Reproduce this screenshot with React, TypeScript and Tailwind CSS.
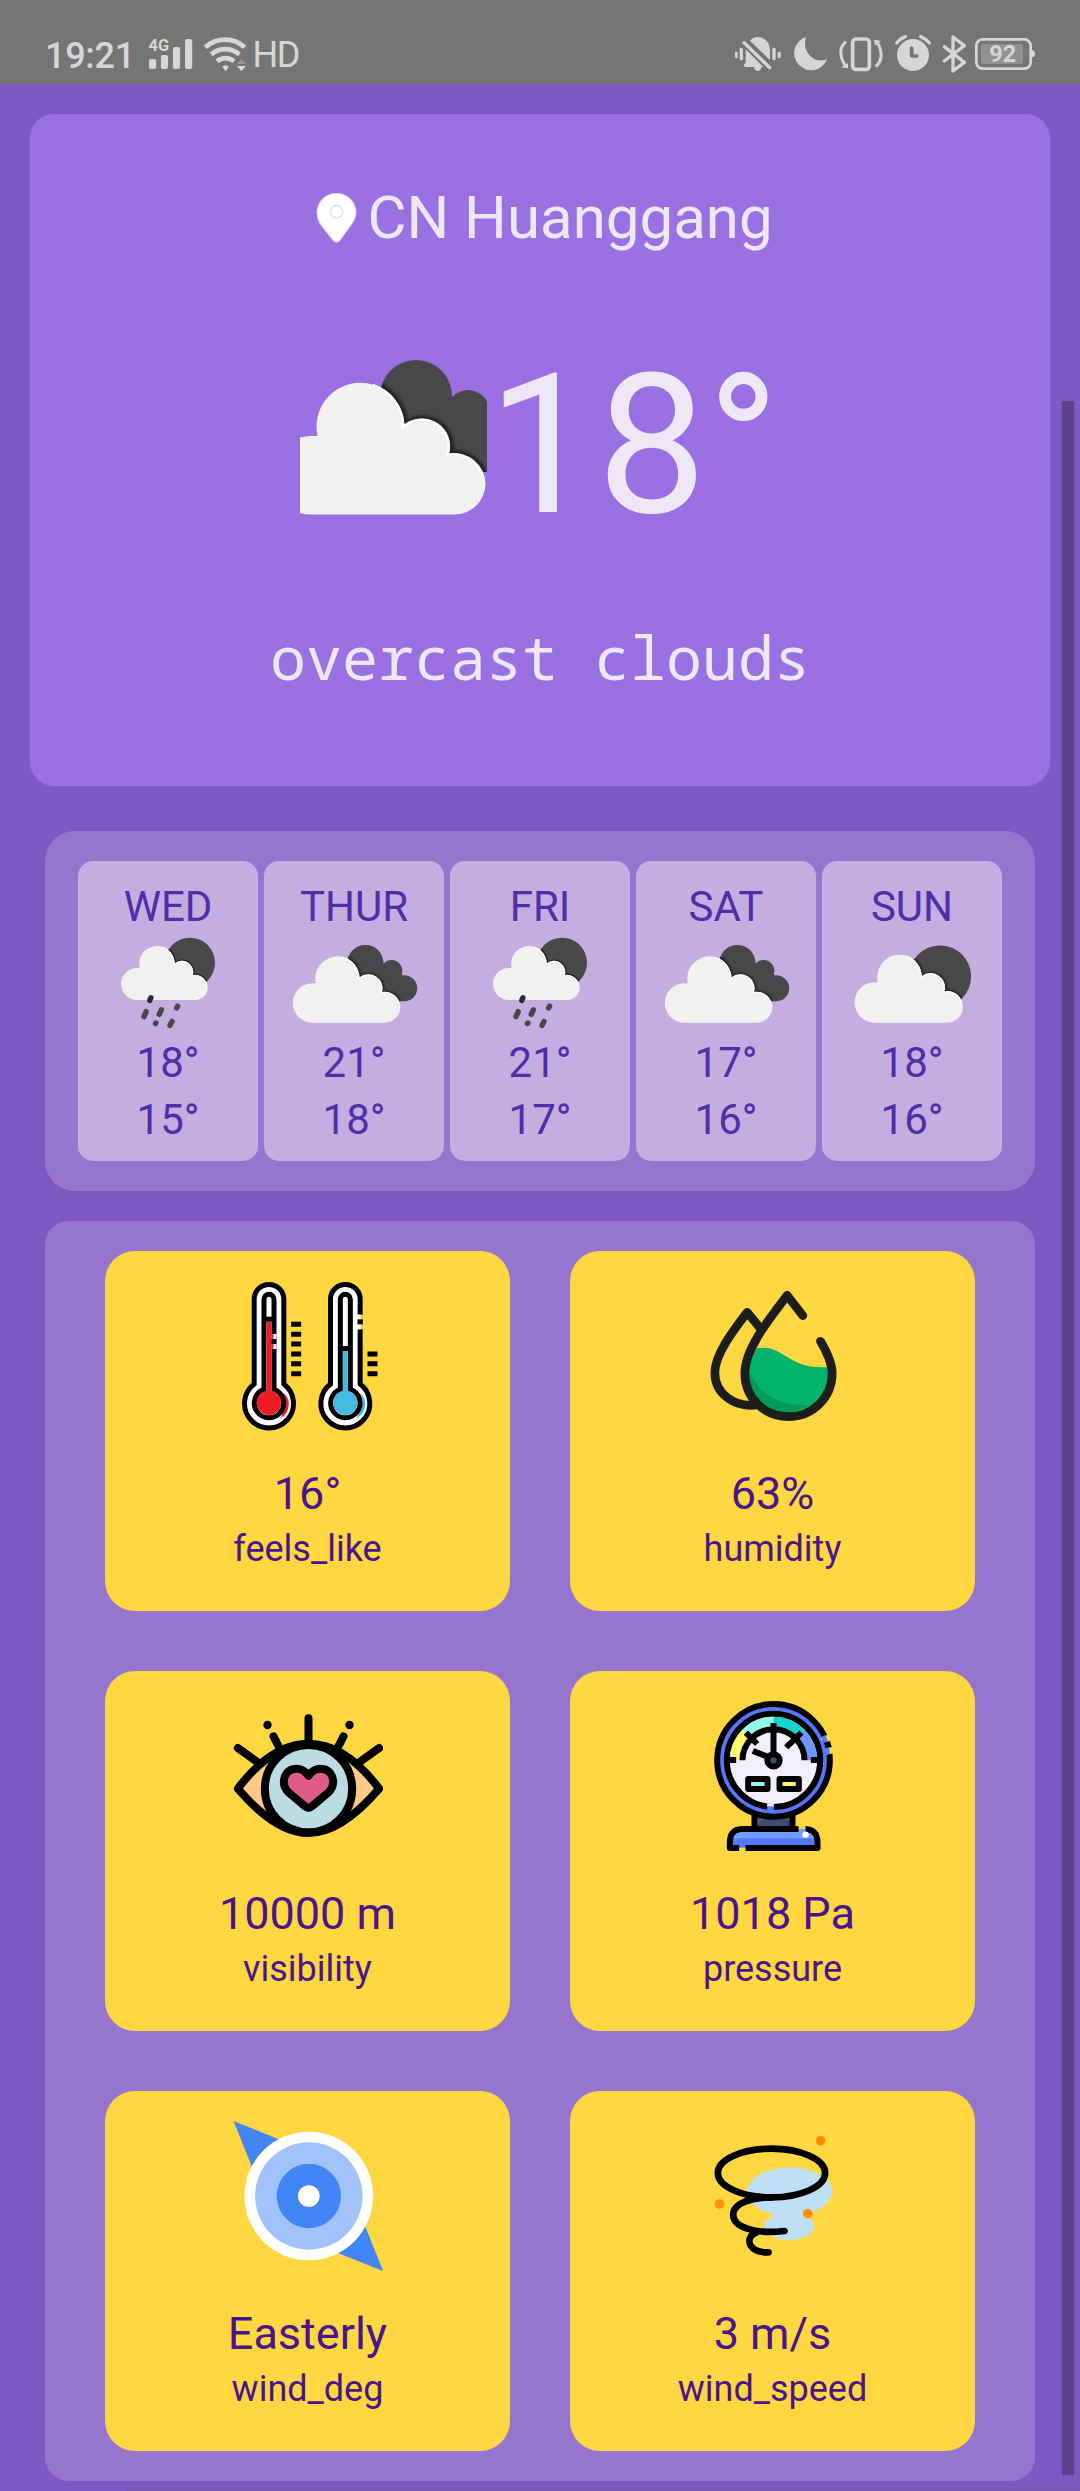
import type { ReactNode } from "react";

const WHITE_CLOUD =
  "M11 168.5A39.25 39.25 0 0 1 11 90L17.5 90A44 44 0 1 1 104.5 80L106 78.5A27.3 27.3 0 0 1 149 107.7A31 31 0 0 1 185.5 137.5A31 31 0 0 1 154.5 168.5Z";
const CLOUD_EDGE =
  "M74 38A44 44 0 0 1 104.5 80L106 78.5A27.3 27.3 0 0 1 149 107.7A31 31 0 0 1 184 129";

function DarkCloud() {
  return (
    <>
      <circle cx="116" cy="50" r="36" />
      <circle cx="168" cy="65.5" r="21.5" />
      <circle cx="193" cy="100" r="26" />
      <path d="M116 50L152.5 51L168 66L189 72L193 100V126H130Z" />
    </>
  );
}

function FrontCloud({ id, children }: { id: string; children: ReactNode }) {
  return (
    <>
      <defs>
        <clipPath id={id}>{children}</clipPath>
        <filter id={id + "s"} x="-20%" y="-20%" width="140%" height="140%">
          <feGaussianBlur stdDeviation="1.6" />
        </filter>
      </defs>
      <g clipPath={`url(#${id})`}>
        <path d={CLOUD_EDGE} fill="none" stroke="#222223" strokeWidth="7" filter={`url(#${id}s)`} />
      </g>
      <path d={WHITE_CLOUD} fill="#f1f1f0" />
      <path d={CLOUD_EDGE} fill="none" stroke="#ffffff" strokeWidth="2.5" transform="translate(-1.4 1)" />
    </>
  );
}

function BigCloud() {
  return (
    <svg className="h-[200px] w-[187px] shrink-0" viewBox="0 0 187 200">
      <g fill="#48484a">
        <DarkCloud />
      </g>
      <FrontCloud id="hero">
        <circle cx="116" cy="50" r="36" />
        <circle cx="168" cy="65.5" r="21.5" />
        <circle cx="193" cy="100" r="26" />
        <path d="M116 50L152.5 51L168 66L189 72L193 100V126H130Z" />
      </FrontCloud>
    </svg>
  );
}

function OvercastIcon({ id }: { id: string }) {
  return (
    <svg className="h-[100px] w-[180px]" viewBox="0 0 180 100">
      <g transform="translate(43 6.9) scale(.5032)">
        <g fill="#48484a">
          <DarkCloud />
        </g>
        <FrontCloud id={id}>
          <circle cx="116" cy="50" r="36" />
          <circle cx="168" cy="65.5" r="21.5" />
          <circle cx="193" cy="100" r="26" />
          <path d="M116 50L152.5 51L168 66L189 72L193 100V126H130Z" />
        </FrontCloud>
      </g>
    </svg>
  );
}

function BrokenIcon({ id }: { id: string }) {
  return (
    <svg className="h-[100px] w-[180px]" viewBox="0 0 180 100">
      <circle cx="118.1" cy="45.4" r="31" fill="#48484a" />
      <g transform="translate(46.9 4.7) scale(.507 .516)">
        <FrontCloud id={id}>
          <circle cx="140.4" cy="79" r="61" />
        </FrontCloud>
      </g>
    </svg>
  );
}

function RainIcon({ id }: { id: string }) {
  return (
    <svg className="h-[100px] w-[180px]" viewBox="0 0 180 100">
      <circle cx="112" cy="31.7" r="25" fill="#48484a" />
      <g transform="translate(54.5 0) scale(.405 .41)">
        <FrontCloud id={id}>
          <circle cx="142" cy="77.3" r="61.5" />
        </FrontCloud>
      </g>
      <g stroke="#48484a" strokeWidth="5.4" strokeLinecap="round">
        <path d="M72.9 66.8L71.8 69.4" stroke="#2b2b2c" />
        <path d="M68.2 80.6L66 85.6" />
        <path d="M83.4 78.8L81.2 83.4" />
        <path d="M99.6 75.2L98.6 77" />
        <path d="M77.9 92L77.5 92.6" />
        <path d="M94 90.4L92 94.4" />
      </g>
    </svg>
  );
}

function SignalIcons() {
  return (
    <svg className="h-[40px] w-[100px]" viewBox="148 35 100 40" fill="#d6d6d6">
      <text x="148.6" y="51.2" fontSize="17" fontWeight="700" fontFamily="Roboto, sans-serif" textLength="20.5" lengthAdjust="spacingAndGlyphs">
        4G
      </text>
      <rect x="149" y="59" width="7.2" height="10" rx="2" />
      <rect x="160.9" y="55" width="7.2" height="14" rx="2" />
      <rect x="172.9" y="47" width="7.2" height="22" rx="2" />
      <rect x="185" y="39" width="7.2" height="30" rx="2" />
      <g fill="none" stroke="#d6d6d6" strokeWidth="4.6">
        <path d="M205.3 47.3A29 29 0 0 1 244.7 47.3" />
        <path d="M211.2 54.4A21.5 21.5 0 0 1 239.3 54.4" />
        <path d="M217 61.3A13 13 0 0 1 234 61.3" />
      </g>
      <path d="M222.4 66.4Q225.5 63.9 228.8 66.4L226.2 70.4Q225.5 71 224.8 70.4Z" />
      <path d="M237 66H245.8L242.2 70.4Q241.4 71.2 240.6 70.4Z" />
      <path d="M236.8 64H245.8L241.4 59Z" fill="#989898" />
    </svg>
  );
}

function SystemIcons() {
  return (
    <svg className="h-[41px] w-[304px]" viewBox="99 99 912 123" fill="#d6d6d6">
      <g>
        <rect x="105" y="155" width="8" height="20" rx="4" />
        <rect x="119" y="143" width="10" height="38" rx="5" />
        <rect x="217" y="143" width="10" height="38" rx="5" />
        <rect x="233" y="155" width="9" height="20" rx="4" />
        <path d="M150 122Q160 111 173 111Q209 114 210 153V180Z" />
        <path d="M137 148L190 201H184Q182 213 173 213Q164 213 162 201H136Q131 200 132 193Q138 190 137 182Z" />
        <path d="M132 128L209 203" stroke="#d6d6d6" strokeWidth="10" strokeLinecap="round" />
      </g>
      <path d="M318 111A51 51 0 1 0 381 178Q352 189 330 167Q308 144 318 111Z" />
      <g fill="none" stroke="#d6d6d6" strokeWidth="9">
        <rect x="458" y="117" width="50" height="91" rx="10" strokeWidth="11" />
        <path d="M438 125Q420 140 422.500 162Q424 180 435 196" />
        <path d="M527 200Q545 184 543.500 162Q542 145 534 130" />
      </g>
      <path d="M444 189V205L423 202ZM522 119L543 123L525 137Z" />
      <circle cx="639" cy="165" r="48" />
      <g fill="none" strokeLinecap="round">
        <path d="M590 129Q600 116 616 110M688 129Q677 116 662 110" stroke="#d6d6d6" strokeWidth="10" />
        <path d="M635 144V168H650" stroke="#757575" strokeWidth="11" strokeLinejoin="round" />
        <path d="M733 140L793 187L759 213V111L793 137L733 183" stroke="#d6d6d6" strokeWidth="10" strokeLinejoin="round" />
      </g>
      <rect x="829" y="118" width="163" height="88" rx="19" fill="none" stroke="#d6d6d6" strokeWidth="8" />
      <rect x="843" y="132" width="126" height="60" rx="9" fill="#929292" />
      <path d="M996 150Q1005 152 1005 161Q1005 170 996 172Z" />
      <text x="908" y="186" textAnchor="middle" fontSize="70" fontWeight="700" fontFamily="Roboto, sans-serif">
        92
      </text>
    </svg>
  );
}

function PinIcon() {
  return (
    <svg className="size-[60px] shrink-0" viewBox="0 0 60 60">
      <path
        d="M29.500 5.500C18.500 5.500 10.200 14 10.200 24.500C10.200 30 12 34 14.500 37.500L26.500 52.500Q29.500 55.600 32.500 52.500L43.500 37.500C46.500 33.500 48.800 30 48.800 24.500C48.800 14 40.500 5.500 29.500 5.500Z"
        fill="#fff"
        stroke="#e2e0e8"
        strokeWidth="1.2"
      />
      <circle cx="29.500" cy="23.500" r="6.200" fill="#fff" stroke="#e0e0e4" strokeWidth="1.400" />
    </svg>
  );
}

function Thermometer({ color, level }: { color: string; level: number }) {
  return (
    <g>
      <path d="M161 402V148A44.500 44.500 0 0 1 250 148V402A73.500 73.500 0 1 1 161 402Z" fill="#fff" stroke="#000" strokeWidth="15" />
      <path d="M237 424Q266 436 265 462Q264 492 240 504Q252 480 252 460Z" fill={color} />
      <path d="M190.500 418V148A15 15 0 0 1 220.500 148V418A44 44 0 1 1 190.500 418Z" fill="#fff" stroke="#000" strokeWidth="15" />
      <path d={`M198 ${level + 14}H213V422A37 37 0 1 1 198 422Z`} fill={color} />
      <path d={`M190 ${level + 6.5}H221`} stroke="#000" strokeWidth="15" />
    </g>
  );
}

function FeelsLikeIcon() {
  return (
    <svg className="size-[150px]" viewBox="97.5 93 450 450">
      <Thermometer color="#ee1c25" level={201} />
      <g transform="translate(229 0)">
        <Thermometer color="#42bbdd" level={289} />
      </g>
      <path d="M212 252H228V297H212Z" fill="#fff" />
      <path d="M212 252H219V297H212Z" fill="#ee1c25" />
      <path d="M213 267H228V282H213Z" fill="#000" />
      <path d="M471 194H487V238H471Z" fill="#ffd740" />
      <path d="M465 194H480V238H465Z" fill="#fff" />
      <path d="M471 208H487V223H471Z" fill="#000" />
      <path
        d="M272 223H302M272 253H302M272 282H302M272 312H302M272 341H302M272 371H302M501 312H531M501 341H531M501 371H531"
        stroke="#000"
        strokeWidth="15"
      />
    </svg>
  );
}

function HumidityIcon() {
  return (
    <svg className="size-[150px]" viewBox="52.5 63 450 450">
      <path d="M228 265C310 250 320 330 442 321C456 390 405 458 322 458C245 458 190 390 208 310Z" fill="#00b56b" />
      <path d="M207 334C240 410 300 437 382 435C330 475 260 460 228 425Q202 390 207 334Z" fill="#009b5a" />
      <g fill="none" stroke="#1d1d1b" strokeWidth="26" strokeLinecap="round" strokeLinejoin="round">
        <path d="M367 167L320 106C270 172 193 265 193 340C193 412 250 470 324 470C397 470 455 412 455 340C455 308 439 276 420 244" />
        <path d="M232 434C160 446 103 398 103 338C103 284 156 215 200 157L236 201" />
      </g>
    </svg>
  );
}

function VisibilityIcon() {
  return (
    <svg className="size-[150px]" viewBox="67.5 33 450 450">
      <path
        d="M82 296C148 208 222 161 294 161C366 161 440 208 506 296C434 380 366 429 294 429C222 429 154 380 82 296Z"
        fill="#ffcb87"
        stroke="#000"
        strokeWidth="24"
        strokeLinejoin="round"
      />
      <circle cx="294" cy="296" r="131" fill="#bcdce3" stroke="#000" strokeWidth="24" />
      <path
        d="M294 257C270 222 220 234 220 276C220 290 226 300 236 309L284 349Q294 358 304 349L352 309C362 300 368 290 368 276C368 234 318 222 294 257Z"
        fill="#e05c86"
        stroke="#000"
        strokeWidth="24"
        strokeLinejoin="round"
      />
      <path
        d="M294 85V160M82 174L145 219M189 139L209 178M506 174L443 219M399 139L379 178"
        fill="none"
        stroke="#000"
        strokeWidth="24"
        strokeLinecap="round"
      />
      <circle cx="171" cy="105" r="12.500" />
      <circle cx="417" cy="105" r="12.500" />
    </svg>
  );
}

function PressureIcon() {
  return (
    <svg className="size-[150px]" viewBox="22.5 63 450 450">
      <path d="M192 405V450H306V405" fill="#3c4b70" stroke="#000" strokeWidth="18" />
      <path d="M201 437Q204 418 232 417H201Z" fill="#53607f" />
      <circle cx="249" cy="241" r="169" fill="#5577fb" stroke="#000" strokeWidth="18" />
      <path d="M402 169A170 170 0 0 1 419 222" fill="none" stroke="#ffd740" strokeWidth="26" />
      <path d="M393 170L406 165Q416 194 418 222H398Z" fill="#5577fb" />
      <path d="M400 188L418 183L424 201L405 205Z" fill="#000" />
      <circle cx="249" cy="241" r="140" fill="#f1f0ff" stroke="#000" strokeWidth="18" />
      <path d="M230 374H250V392H230Z" fill="#5577fb" />
      <path d="M230 370H250V379H230Z" fill="#f1f0ff" />
      <g fill="none" strokeWidth="30">
        <path d="M133 241A116 116 0 0 1 167 159" stroke="#fffa70" />
        <path d="M167 159A116 116 0 0 1 249 125" stroke="#90fbec" />
        <path d="M249 125A116 116 0 0 1 331 159" stroke="#16d3cb" />
        <path d="M331 159A116 116 0 0 1 365 241" stroke="#6d97ff" />
      </g>
      <path
        d="M156 241A93 93 0 0 1 342 241M249 129V241M187 213L249 237M166 158L200 192M333 158L287 202M112 240H137M361 240H386"
        fill="none"
        stroke="#000"
        strokeWidth="18"
      />
      <circle cx="249" cy="241" r="18.500" fill="#3c4b70" stroke="#000" strokeWidth="18" />
      <g strokeWidth="18" stroke="#000" strokeLinejoin="round">
        <path d="M173 297H231V327H173Z" fill="#90fbec" />
        <path d="M267 297H325V327H267Z" fill="#fff26b" />
      </g>
      <path d="M118 504V488Q118 447 158 447H340Q381 447 381 488V504Z" fill="#5577fb" stroke="#000" strokeWidth="18" strokeLinejoin="round" />
      <path d="M128 475Q133 456 158 456H340Q366 456 371 475Z" fill="#739dff" />
      <path d="M324 437H345V447H324Z" fill="#ffd740" />
      <path d="M324 447H345V458H324Z" fill="#739dff" />
      <path d="M146 495H165V504H146Z" fill="#5577fb" />
      <path d="M146 503H165V514H146Z" fill="#ffd740" />
      <circle cx="345" cy="464" r="9.500" fill="#fff" />
    </svg>
  );
}

function CompassIcon() {
  return (
    <svg className="size-[150px]" viewBox="67.5 63 450 450">
      <path d="M69 63L240 132L140 240ZM518 513L350 446L450 344Z" fill="#4286f5" />
      <circle cx="295" cy="288" r="193" fill="#fff" />
      <circle cx="295" cy="288" r="161" fill="#a1c2fa" />
      <circle cx="295" cy="288" r="96.500" fill="#4286f5" />
      <circle cx="295" cy="288" r="32.500" fill="#fff" />
    </svg>
  );
}

function WindIcon() {
  return (
    <svg className="size-[150px]" viewBox="22.5 33 450 450">
      <ellipse cx="297" cy="245" rx="128" ry="73" fill="#bfdff6" />
      <ellipse cx="296" cy="349" rx="75" ry="41" fill="#bfdff6" />
      <g fill="none" stroke="#000" strokeWidth="20" strokeLinecap="round">
        <ellipse cx="243" cy="189" rx="161" ry="73" />
        <path d="M243 262C190 262 128 277 128 314C128 350 190 374 282 363" />
        <path d="M200 366C176 374 173 392 180 406C190 421 210 428 234 427" />
      </g>
      <g fill="#ff8f00">
        <circle cx="390" cy="92" r="14.500" />
        <circle cx="87" cy="282" r="14.500" />
        <circle cx="352" cy="311" r="14.500" />
      </g>
    </svg>
  );
}

const DAYS = [
  { name: "WED", icon: <RainIcon id="wed" />, high: "18°", low: "15°" },
  { name: "THUR", icon: <OvercastIcon id="thur" />, high: "21°", low: "18°" },
  { name: "FRI", icon: <RainIcon id="fri" />, high: "21°", low: "17°" },
  { name: "SAT", icon: <OvercastIcon id="sat" />, high: "17°", low: "16°" },
  { name: "SUN", icon: <BrokenIcon id="sun" />, high: "18°", low: "16°" },
];

const DETAILS = [
  { label: "feels_like", value: "16°", icon: <FeelsLikeIcon /> },
  { label: "humidity", value: "63%", icon: <HumidityIcon /> },
  { label: "visibility", value: "10000 m", icon: <VisibilityIcon /> },
  { label: "pressure", value: "1018 Pa", icon: <PressureIcon /> },
  { label: "wind_deg", value: "Easterly", icon: <CompassIcon /> },
  { label: "wind_speed", value: "3 m/s", icon: <WindIcon /> },
];

export default function App() {
  return (
    <div className="relative h-[2491px] w-[1080px] overflow-hidden bg-[#7e57c2] font-['Roboto',sans-serif]">
      <header className="flex h-[84px] items-start justify-between bg-[#757575] pl-[45px] pr-[43px] text-[36px] leading-[42px] text-[#d6d6d6]">
        <div className="flex items-start">
          <span className="mt-[35px] w-[103px] font-medium tracking-[-0.3px]">19:21</span>
          <span className="mt-[35px]">
            <SignalIcons />
          </span>
          <span className="ml-[4.500px] mt-[34px] tracking-[-1.5px]">HD</span>
        </div>
        <span className="mt-[33px]">
          <SystemIcons />
        </span>
      </header>

      <main className="flex flex-col pt-[30px]">
        <section className="mx-[30px] flex h-[672px] flex-col items-center rounded-[24px] bg-[#9a70e2] pt-[69px] text-[#ede7f6]">
          <div className="flex h-[70px] items-center text-[60px] leading-[70px]">
            <PinIcon />
            <span>CN Huanggang</span>
          </div>
          <div className="mt-[93px] flex h-[200px] items-center text-[195px] leading-[200px]">
            <BigCloud />
            <span>18°</span>
          </div>
          <p className="mt-[76px] font-['Droid_Sans_Mono','Noto_Sans_Mono','Liberation_Mono',monospace] text-[60px] leading-[70px]">
            overcast clouds
          </p>
        </section>

        <section className="mx-[45px] mt-[45px] flex h-[360px] gap-[6px] rounded-[30px] bg-[#9575cd] px-[33px] py-[30px]">
          {DAYS.map((day) => (
            <div
              key={day.name}
              className="flex w-[180px] flex-col items-center rounded-[15px] bg-[#c4ade1] pt-[21px] text-[42px] text-[#512da8]"
            >
              <span className="leading-[49px]">{day.name}</span>
              {day.icon}
              <span className="mt-[3px] leading-[57px]">{day.high}</span>
              <span className="leading-[57px]">{day.low}</span>
            </div>
          ))}
        </section>

        <section className="mx-[45px] mt-[30px] grid h-[1260px] grid-cols-[405px_405px] grid-rows-[360px_360px_360px] gap-[60px] rounded-[24px] bg-[#9575cd] px-[60px] py-[30px]">
          {DETAILS.map((item) => (
            <div key={item.label} className="flex flex-col items-center rounded-[30px] bg-[#ffd740] pt-[30px] text-[#4a148c]">
              {item.icon}
              <span className="mt-[33px] text-[45px] leading-[60px]">{item.value}</span>
              <span className="text-[36px] leading-[50px]">{item.label}</span>
            </div>
          ))}
        </section>
        <div className="ml-[126px] mt-[8px] h-[2px] bg-[#7957b0]" />
      </main>

      <div className="absolute left-[1062px] top-[401px] h-[2074px] w-[12px] bg-[#5c408b]" />
    </div>
  );
}
